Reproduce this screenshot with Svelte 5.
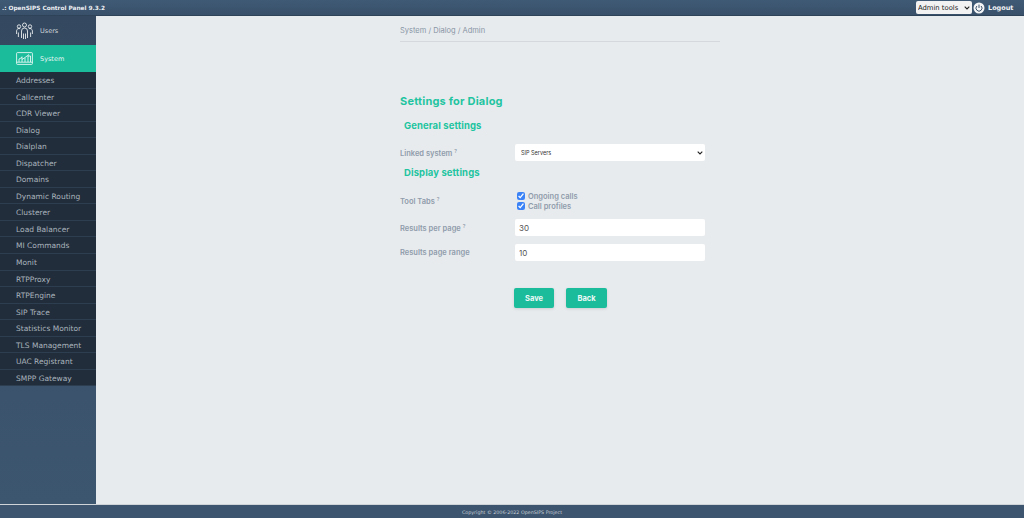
<script>
    const tools = [
        'Addresses', 'Callcenter', 'CDR Viewer', 'Dialog', 'Dialplan', 'Dispatcher', 'Domains',
        'Dynamic Routing', 'Clusterer', 'Load Balancer', 'MI Commands', 'Monit', 'RTPProxy',
        'RTPEngine', 'SIP Trace', 'Statistics Monitor', 'TLS Management', 'UAC Registrant', 'SMPP Gateway'
    ];
</script>

<div class="page">
    <header class="topbar">
        <span class="brand">.: OpenSIPS Control Panel 9.3.2</span>
        <div class="top-right">
            <div class="select-wrap admin-wrap">
                <select class="admin-select">
                    <option>Admin tools</option>
                </select>
                <svg class="chev" viewBox="0 0 6 4" width="6" height="4">
                    <path d="M0.7 0.7L3 3l2.300-2.300" fill="none" stroke="#222" stroke-width="1.100" />
                </svg>
            </div>
            <svg class="power" viewBox="0 0 12 12" width="12" height="12">
                <circle cx="6" cy="6" r="5.5" fill="#f2f4f6" />
                <path d="M3.9 4a3 3 0 1 0 4.2 0" fill="none" stroke="#3a5069" stroke-width="1" />
                <path d="M6 2.6V6" fill="none" stroke="#3a5069" stroke-width="1" />
            </svg>
            <span class="logout">Logout</span>
        </div>
    </header>

    <div class="middle">
        <nav class="sidebar">
            <div class="group">
                <svg viewBox="0 0 17 18" width="17" height="18" fill="none" stroke="#fff" stroke-width="0.8">
                    <circle cx="8.500" cy="3" r="2" />
                    <circle cx="3" cy="4.500" r="1.700" />
                    <circle cx="14" cy="4.500" r="1.700" />
                    <path d="M5.500 16V9a3 3 0 0 1 6 0v7M7.500 11.500V17M9.500 11.500V17" />
                    <path d="M0.600 12V8.800a2.400 2.400 0 0 1 3.600-2M16.400 12V8.800a2.400 2.400 0 0 0-3.600-2M2.400 10.500V15M14.600 10.500V15" />
                </svg>
                <span>Users</span>
            </div>
            <div class="group active">
                <svg viewBox="0 0 17 13" width="17" height="13" fill="none" stroke="#fff" stroke-width="0.8">
                    <rect x="0.600" y="0.600" width="15.800" height="11.800" rx="0.800" />
                    <path d="M0.600 10.200h15.800M3 10V7l3-1.500M6 10V4.500M6 7.500l3-2 4-3M9 10V6M12 10V4h2.500v6" />
                </svg>
                <span>System</span>
            </div>
            <ul class="tool-list">
                {#each tools as tool}
                    <li>{tool}</li>
                {/each}
            </ul>
        </nav>

        <main class="content">
            <div class="panel">
                <div class="crumbs">System / Dialog / Admin</div>
                <h1>Settings for Dialog</h1>
                <h2 class="general">General settings</h2>
                <div class="row linked">
                    <span class="label">Linked system <sup>?</sup></span>
                    <div class="select-wrap">
                        <select class="field select">
                            <option>SIP Servers</option>
                        </select>
                        <svg class="chev" viewBox="0 0 6 4" width="6" height="4">
                            <path d="M0.7 0.7L3 3l2.300-2.300" fill="none" stroke="#222" stroke-width="1.100" />
                        </svg>
                    </div>
                </div>
                <h2 class="display">Display settings</h2>
                <div class="row tabs">
                    <span class="label">Tool Tabs <sup>?</sup></span>
                    <div class="checks">
                        <label><input type="checkbox" checked />Ongoing calls</label>
                        <label><input type="checkbox" checked />Call profiles</label>
                    </div>
                </div>
                <div class="row per-page">
                    <span class="label">Results per page <sup>?</sup></span>
                    <input class="field" value="30" />
                </div>
                <div class="row range">
                    <span class="label">Results page range</span>
                    <input class="field" value="10" />
                </div>
                <div class="actions">
                    <button class="save">Save</button>
                    <button class="back">Back</button>
                </div>
            </div>
        </main>
    </div>

    <footer class="footer">Copyright © 2006-2022 OpenSIPS Project</footer>
</div>

<style>
    :global(body) {
        margin: 0;
    }
    .page {
        display: flex;
        flex-direction: column;
        height: 518px;
        overflow: hidden;
        background: #e8ebee;
        font-family: Inter, "Open Sans", sans-serif;
    }
    .topbar {
        height: 16px;
        flex: none;
        display: flex;
        align-items: center;
        justify-content: space-between;
        background: linear-gradient(to bottom, #3f5a75, #39506a);
        border-bottom: 1px solid #2f4358;
        box-sizing: border-box;
    }
    .brand {
        padding-left: 2px;
        color: #eef1f4;
        font: bold 5.800px "DejaVu Sans", sans-serif;
    }
    .top-right {
        display: flex;
        align-items: center;
    }
    .select-wrap {
        position: relative;
        display: flex;
    }
    .chev {
        position: absolute;
        right: 2px;
        top: 50%;
        margin-top: -2px;
        pointer-events: none;
    }
    .admin-wrap {
        margin-right: 1px;
    }
    .admin-select {
        appearance: none;
        width: 56px;
        height: 13px;
        padding: 0 0 0 2px;
        border: 0;
        border-radius: 2px;
        background: #f2f2f2;
        color: #222;
        font: 6.800px "DejaVu Sans", sans-serif;
    }
    .logout {
        width: 36px;
        padding-left: 3px;
        color: #f2f4f6;
        font: bold 6.500px "DejaVu Sans", sans-serif;
    }
    .middle {
        flex: 1;
        display: flex;
        min-height: 0;
    }
    .sidebar {
        width: 96px;
        flex: none;
        background: linear-gradient(to bottom, #34495f, #3d5670);
    }
    .group {
        height: 29px;
        display: flex;
        align-items: center;
        gap: 7px;
        padding-left: 16px;
        color: #cfd6dd;
        font: 6.500px "DejaVu Sans", sans-serif;
    }
    .group.active {
        height: 27px;
        background: #1abc9c;
        color: #e6f7f3;
    }
    .tool-list {
        list-style: none;
        margin: 0;
        padding: 0;
    }
    .tool-list li {
        height: 16.550px;
        line-height: 17px;
        box-sizing: border-box;
        padding-left: 16px;
        background: #212d3a;
        border-bottom: 1px solid #2c3e50;
        color: #aab4be;
        font-family: "DejaVu Sans", sans-serif;
        font-size: 7.500px;
    }
    .content {
        flex: 1;
        display: flex;
        justify-content: center;
    }
    .panel {
        width: 320px;
    }
    .crumbs {
        height: 25px;
        line-height: 29px;
        border-bottom: 1px solid #d5d9dd;
        color: #8795a4;
        font-size: 7.500px;
    }
    h1 {
        margin: 52px 0 0;
        color: #1fc4a0;
        font-size: 11px;
        line-height: 14px;
        font-weight: 700;
        letter-spacing: 0.2px;
    }
    h2 {
        margin: 0 0 0 4px;
        color: #1fc4a0;
        font-size: 9.500px;
        line-height: 12px;
        font-weight: 700;
        letter-spacing: 0.1px;
    }
    .general {
        margin-top: 12px;
    }
    .display {
        margin-top: 6px;
    }
    .row {
        display: flex;
        align-items: center;
    }
    .label {
        width: 115px;
        flex: none;
        color: #8f9cab;
        font-size: 7.500px;
        font-weight: 600;
    }
    .linked .label,
    .per-page .label {
        padding-top: 1px;
    }
    sup {
        font-size: 5px;
        line-height: 0;
    }
    .field {
        width: 190px;
        height: 17px;
        box-sizing: border-box;
        padding: 0 4px;
        border: 0;
        border-radius: 2px;
        background: #fff;
        color: #555;
        font-family: inherit;
        font-size: 8px;
    }
    .select {
        appearance: none;
        padding: 0 0 0 6px;
        color: #333;
        font-size: 5.500px;
    }
    .linked {
        margin-top: 12px;
    }
    .tabs {
        margin-top: 13px;
    }
    .checks {
        display: flex;
        flex-direction: column;
        gap: 2px;
        padding-left: 2px;
    }
    .checks label {
        display: flex;
        align-items: center;
        gap: 3px;
        height: 8px;
        color: #8f9cab;
        font-size: 7.500px;
        font-weight: 600;
    }
    .checks input {
        width: 8px;
        height: 8px;
        margin: 0;
        accent-color: #3b82f6;
    }
    .per-page {
        margin-top: 9px;
    }
    .range {
        margin-top: 8px;
    }
    .actions {
        display: flex;
        gap: 12px;
        margin: 27px 0 0 114px;
    }
    .actions button {
        height: 20px;
        padding: 0;
        border: 0;
        border-radius: 2px;
        background: #1abc9c;
        box-shadow: 0 1px 3px rgba(0, 0, 0, 0.12);
        color: #eef9f6;
        font-family: inherit;
        font-size: 7.500px;
        font-weight: 700;
    }
    .save {
        width: 40px;
    }
    .back {
        width: 41px;
    }
    .footer {
        height: 14px;
        flex: none;
        background: #3d556e;
        border-top: 1px solid #cfd4d9;
        box-sizing: border-box;
        text-align: center;
        color: #c6ced6;
        font: 4.800px/16px "DejaVu Sans", sans-serif;
    }
</style>
